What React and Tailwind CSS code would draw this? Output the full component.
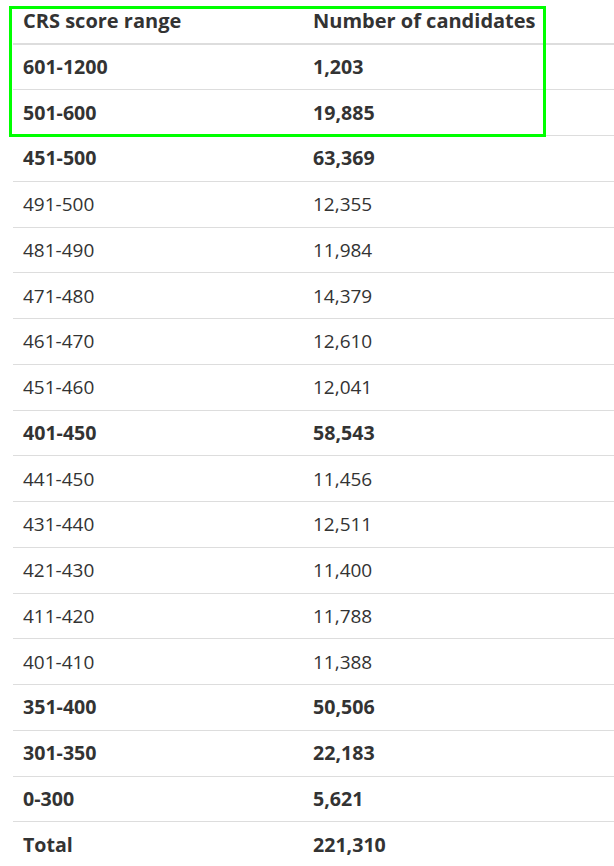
import React from "react";

const rows = [
  { range: "601-1200", count: "1,203", bold: true },
  { range: "501-600", count: "19,885", bold: true },
  { range: "451-500", count: "63,369", bold: true },
  { range: "491-500", count: "12,355" },
  { range: "481-490", count: "11,984" },
  { range: "471-480", count: "14,379" },
  { range: "461-470", count: "12,610" },
  { range: "451-460", count: "12,041" },
  { range: "401-450", count: "58,543", bold: true },
  { range: "441-450", count: "11,456" },
  { range: "431-440", count: "12,511" },
  { range: "421-430", count: "11,400" },
  { range: "411-420", count: "11,788" },
  { range: "401-410", count: "11,388" },
  { range: "351-400", count: "50,506", bold: true },
  { range: "301-350", count: "22,183", bold: true },
  { range: "0-300", count: "5,621", bold: true },
  { range: "Total", count: "221,310", bold: true, last: true },
];

export default function App() {
  return (
    <div className="relative w-[614px] h-[866px] overflow-hidden bg-white font-['Open_Sans',sans-serif] text-[#333]">
      <div className="pl-[13px]">
        <table className="w-[640px] border-collapse text-left">
          <thead>
            <tr className="h-[44px] border-b-2 border-[#ddd] text-[20px] font-bold leading-[26px]">
              <th className="w-[300px] px-[10px] pb-[1px] align-middle">CRS score range</th>
              <th className="pb-[1px] align-middle">Number of candidates</th>
            </tr>
          </thead>
          <tbody>
            {rows.map((r) => (
              <tr
                key={r.range}
                className={`h-[45.76px] ${r.last ? "" : "border-b border-[#ddd]"} ${r.bold ? "text-[19.6px] font-bold" : "text-[19px] font-normal"} leading-[26px]`}
              >
                <td className="px-[10px] align-middle">{r.range}</td>
                <td className="align-middle">{r.count}</td>
              </tr>
            ))}
          </tbody>
        </table>
      </div>

      {/* highlight box over the top rows */}
      <div className="absolute left-[9px] top-[6px] w-[537px] h-[131px] border-[3px] border-[#00ff00]" />
    </div>
  );
}
